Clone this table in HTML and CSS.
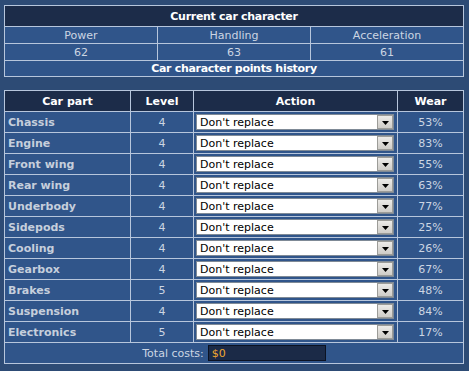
FILE: index.html
```html
<!DOCTYPE html>
<html lang="en">
<head>
    <meta charset="UTF-8">
    <title>Car character</title>
    <link rel="stylesheet" href="styles.css">
</head>
<body>
    <table class="grid character">
        <tr>
            <th colspan="3">Current car character</th>
        </tr>
        <tr class="plain">
            <td>Power</td>
            <td>Handling</td>
            <td>Acceleration</td>
        </tr>
        <tr class="plain">
            <td>62</td>
            <td>63</td>
            <td>61</td>
        </tr>
        <tr>
            <td colspan="3" class="link">Car character points history</td>
        </tr>
    </table>

    <table class="grid parts">
        <tr class="head">
            <th class="c-part">Car part</th>
            <th class="c-level">Level</th>
            <th class="c-action">Action</th>
            <th class="c-wear">Wear</th>
        </tr>
        <tr><td class="name">Chassis</td><td>4</td><td class="act"><div class="select"><span class="val">Don't replace</span><span class="arrow"><svg width="7" height="4" viewBox="0 0 7 4"><path d="M0 0h7L3.5 4z" fill="#000"/></svg></span></div></td><td>53%</td></tr>
        <tr><td class="name">Engine</td><td>4</td><td class="act"><div class="select"><span class="val">Don't replace</span><span class="arrow"><svg width="7" height="4" viewBox="0 0 7 4"><path d="M0 0h7L3.5 4z" fill="#000"/></svg></span></div></td><td>83%</td></tr>
        <tr><td class="name">Front wing</td><td>4</td><td class="act"><div class="select"><span class="val">Don't replace</span><span class="arrow"><svg width="7" height="4" viewBox="0 0 7 4"><path d="M0 0h7L3.5 4z" fill="#000"/></svg></span></div></td><td>55%</td></tr>
        <tr><td class="name">Rear wing</td><td>4</td><td class="act"><div class="select"><span class="val">Don't replace</span><span class="arrow"><svg width="7" height="4" viewBox="0 0 7 4"><path d="M0 0h7L3.5 4z" fill="#000"/></svg></span></div></td><td>63%</td></tr>
        <tr><td class="name">Underbody</td><td>4</td><td class="act"><div class="select"><span class="val">Don't replace</span><span class="arrow"><svg width="7" height="4" viewBox="0 0 7 4"><path d="M0 0h7L3.5 4z" fill="#000"/></svg></span></div></td><td>77%</td></tr>
        <tr><td class="name">Sidepods</td><td>4</td><td class="act"><div class="select"><span class="val">Don't replace</span><span class="arrow"><svg width="7" height="4" viewBox="0 0 7 4"><path d="M0 0h7L3.5 4z" fill="#000"/></svg></span></div></td><td>25%</td></tr>
        <tr><td class="name">Cooling</td><td>4</td><td class="act"><div class="select"><span class="val">Don't replace</span><span class="arrow"><svg width="7" height="4" viewBox="0 0 7 4"><path d="M0 0h7L3.5 4z" fill="#000"/></svg></span></div></td><td>26%</td></tr>
        <tr><td class="name">Gearbox</td><td>4</td><td class="act"><div class="select"><span class="val">Don't replace</span><span class="arrow"><svg width="7" height="4" viewBox="0 0 7 4"><path d="M0 0h7L3.5 4z" fill="#000"/></svg></span></div></td><td>67%</td></tr>
        <tr><td class="name">Brakes</td><td>5</td><td class="act"><div class="select"><span class="val">Don't replace</span><span class="arrow"><svg width="7" height="4" viewBox="0 0 7 4"><path d="M0 0h7L3.5 4z" fill="#000"/></svg></span></div></td><td>48%</td></tr>
        <tr><td class="name">Suspension</td><td>4</td><td class="act"><div class="select"><span class="val">Don't replace</span><span class="arrow"><svg width="7" height="4" viewBox="0 0 7 4"><path d="M0 0h7L3.5 4z" fill="#000"/></svg></span></div></td><td>84%</td></tr>
        <tr><td class="name">Electronics</td><td>5</td><td class="act"><div class="select"><span class="val">Don't replace</span><span class="arrow"><svg width="7" height="4" viewBox="0 0 7 4"><path d="M0 0h7L3.5 4z" fill="#000"/></svg></span></div></td><td>17%</td></tr>
        <tr class="total">
            <td colspan="4">
                <div class="total-line">
                    <span>Total costs:</span>
                    <span class="cost">$0</span>
                </div>
            </td>
        </tr>
    </table>
</body>
</html>
```

FILE: styles.css
```css
body{
    margin: 0;
    padding: 5px 4px;
    background: #2d4b75;
    font-family: 'DejaVu Sans', Verdana, sans-serif;
    font-size: 11px;
    color: #ccd5e3;
}
.grid{
    width: 460px;
    border-collapse: collapse;
    border: 1px solid #b7c6dc;
}
.grid th,
.grid td{
    border: 1px solid #b7c6dc;
    padding: 0;
    text-align: center;
    background: #30558a;
}
.grid th{
    background: #1c2c49;
    color: #fff;
    font-weight: bold;
    height: 20px;
}

/* top box */
.character .plain td{
    height: 16px;
    width: 33%;
}
.character th,
.character td.link{
    letter-spacing: -0.3px;
}
.character td.link{
    height: 15px;
    font-weight: bold;
    color: #fff;
}

/* parts list */
.parts{
    margin-top: 13px;
}
.parts td{
    height: 20px;
}
.parts .c-part{ width: 125px; }
.parts .c-level{ width: 62px; }
.parts .c-action{ width: 203px; }
.parts td.name{
    text-align: left;
    padding-left: 3px;
    font-weight: bold;
    color: #c6cfdc;
}
.parts td.act{
    padding: 0 3px 0 2px;
}
.select{
    display: flex;
    align-items: center;
    height: 16px;
    background: #fff;
    border: 1px solid #7f8a96;
    box-sizing: border-box;
    color: #000;
    text-align: left;
}
.select .val{
    flex: 1;
    padding-left: 3px;
}
.select .arrow{
    display: flex;
    justify-content: center;
    align-items: center;
    width: 16px;
    height: 14px;
    box-sizing: border-box;
    background: linear-gradient(#ecebe8, #cfcdc8);
    border: 1px solid #9c9c98;
}
.select .arrow svg{
    margin-top: 2px;
}
.parts .total td{
    height: 20px;
}
.total-line{
    display: flex;
    justify-content: center;
    align-items: center;
    gap: 4px;
}
.cost{
    display: inline-block;
    width: 118px;
    height: 16px;
    line-height: 15px;
    box-sizing: border-box;
    padding-left: 3px;
    background: #1b2a47;
    border: 1px solid #0b1222;
    color: #f0a830;
    text-align: left;
}
```
